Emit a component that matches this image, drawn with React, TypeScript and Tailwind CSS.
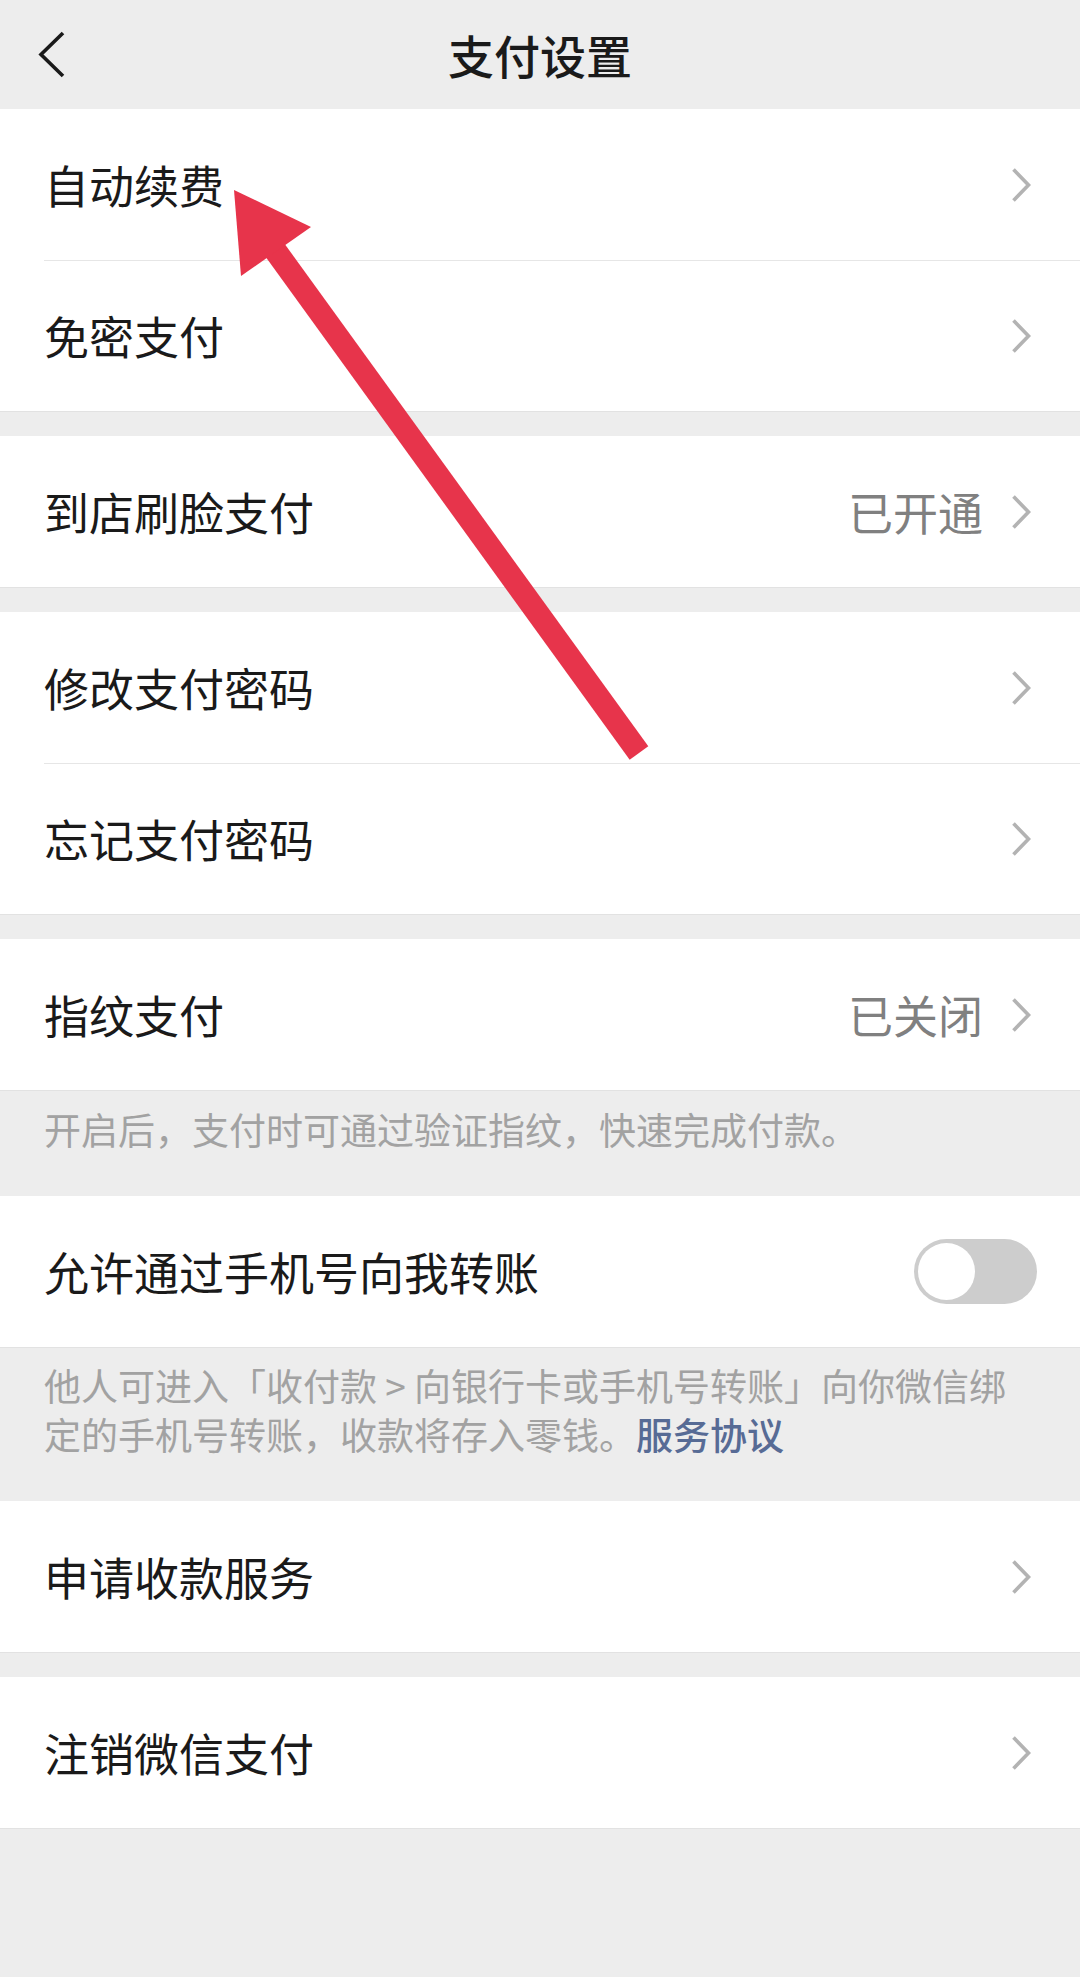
import React from 'react';
import clsx from 'clsx';

const Chevron = () => (
  <svg width="20" height="34" viewBox="0 0 20 34" className="shrink-0">
    <polyline points="2.5,1.5 17.5,17 2.5,32.5" fill="none" stroke="#b3b3b3" strokeWidth="3.6" />
  </svg>
);

const Toggle = () => (
  <div className="flex h-[65px] w-[123px] items-center rounded-full bg-[#cdcdcd] pl-[4px]">
    <div className="h-[57px] w-[57px] rounded-full bg-white" />
  </div>
);

type RowProps = {
  label: string;
  value?: string;
  toggle?: boolean;
  divider?: boolean;
};

const Row = ({ label, value, toggle, divider }: RowProps) => (
  <div className="bg-white pl-[44px]">
    <div
      className={clsx(
        'flex h-[151px] items-center',
        toggle ? 'pr-[43px]' : 'pr-[49px]',
        divider && 'border-t border-[#e6e6e6]'
      )}
    >
      <span className="flex-1 text-[45px] text-[#1a1a1a]">{label}</span>
      {value && <span className="mr-[28px] text-[45px] text-[#808080]">{value}</span>}
      {toggle ? <Toggle /> : <Chevron />}
    </div>
  </div>
);

const Group = ({ children, className }: { children: React.ReactNode; className?: string }) => (
  <div className={clsx('bg-white shadow-[0_1px_0_#e2e2e2]', className)}>{children}</div>
);

const App = () => {
  return (
    <div className="relative min-h-[1977px] bg-[#ededed] font-['Noto_Sans_CJK_SC','Noto_Sans',sans-serif]">
      <header className="grid h-[109px] grid-cols-[1fr_auto_1fr] items-center">
        <div className="pl-[36px]">
          <svg width="34" height="50" viewBox="0 0 34 50">
            <polyline points="27,3 5,24.5 27,46" fill="none" stroke="#1a1a1a" strokeWidth="3.6" />
          </svg>
        </div>
        <h1 className="text-[46px] font-medium text-[#1a1a1a]">支付设置</h1>
        <div />
      </header>

      <Group>
        <Row label="自动续费" />
        <Row label="免密支付" divider />
      </Group>

      <Group className="mt-[25px]">
        <Row label="到店刷脸支付" value="已开通" />
      </Group>

      <Group className="mt-[25px]">
        <Row label="修改支付密码" />
        <Row label="忘记支付密码" divider />
      </Group>

      <Group className="mt-[25px]">
        <Row label="指纹支付" value="已关闭" />
      </Group>
      <p className="h-[106px] px-[44px] pt-[15px] text-[37px] leading-[49px] text-[#a2a2a2]">
        开启后，支付时可通过验证指纹，快速完成付款。
      </p>

      <Group>
        <Row label="允许通过手机号向我转账" toggle />
      </Group>
      <p className="h-[154px] pl-[44px] pr-[30px] pt-[14px] text-[37px] leading-[49px] text-[#a2a2a2]">
        他人可进入「收付款 &gt; 向银行卡或手机号转账」向你微信绑
        <br />
        定的手机号转账，收款将存入零钱。
        <span className="font-medium text-[#576b95]">服务协议</span>
      </p>

      <Group>
        <Row label="申请收款服务" />
      </Group>

      <Group className="mt-[25px]">
        <Row label="注销微信支付" />
      </Group>

      {/* annotation arrow drawn over the list */}
      <svg
        className="pointer-events-none absolute left-0 top-0"
        width="1080"
        height="1977"
        viewBox="0 0 1080 1977"
      >
        <line x1="264" y1="235" x2="639" y2="753" stroke="#e7344b" strokeWidth="23" />
        <polygon points="234,190 311,227 241,276" fill="#e7344b" />
      </svg>
    </div>
  );
};

export default App;
